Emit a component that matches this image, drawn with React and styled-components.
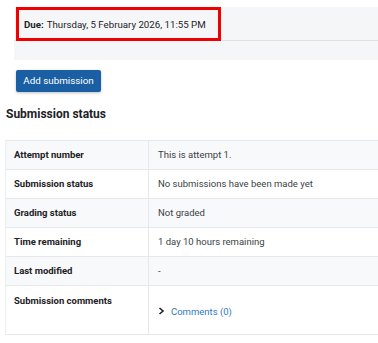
import React from 'react';
import styled, { createGlobalStyle } from 'styled-components';

const GlobalStyle = createGlobalStyle`
  body {
    margin: 0;
    background: #fff;
    font-family: Roboto, 'Liberation Sans', sans-serif;
    color: #1d2125;
    overflow: hidden;
  }
`;

const Page = styled.div`
  width: 378px;
  height: 343px;
  overflow: hidden;
  padding-top: 7px;
  box-sizing: border-box;
`;

const DatesPanel = styled.div`
  margin-left: 14px;
  width: 420px;
  height: 53px;
  background: #f5f6f8;
`;

const DatesRow = styled.div`
  height: 33px;
  border-bottom: 1px solid #dee2e6;
`;

const Highlight = styled.div`
  display: inline-flex;
  align-items: center;
  box-sizing: border-box;
  margin-left: 2px;
  width: 205px;
  height: 34px;
  padding-left: 5px;
  border: 3px solid #f00000;
  font-size: 9.7px;
  color: #1d2125;
  white-space: nowrap;
`;

const Label = styled.strong`
  font-weight: 700;
  margin-right: 3px;
`;

const Actions = styled.div`
  padding: 9px 0 0 16px;
`;

const PrimaryButton = styled.button`
  height: 22px;
  width: 85px;
  padding: 0;
  border: none;
  border-radius: 2px;
  background: #1a5fa3;
  color: #fff;
  font-family: Roboto, 'Liberation Sans', sans-serif;
  font-size: 9.8px;
  box-shadow: 0 1px 3px rgba(0, 0, 0, 0.25);
`;

const Heading = styled.h3`
  margin: 14px 0 0 6px;
  font-size: 12px;
  font-weight: 700;
  color: #1d2125;
  line-height: 16px;
`;

const Table = styled.table`
  margin: 18px 0 0 5px;
  width: 440px;
  border-collapse: collapse;
  font-size: 9.5px;
`;

const Row = styled.tr`
  background: ${p => (p.$striped ? '#f8f9fa' : '#fff')};
  border-top: 1px solid #e6e8ea;
`;

const HeadCell = styled.th`
  width: 134px;
  height: 28px;
  padding: 0 0 0 8px;
  text-align: left;
  vertical-align: ${p => (p.$top ? 'top' : 'middle')};
  padding-top: ${p => (p.$top ? '9px' : '0')};
  font-weight: 700;
  color: #1d2125;
  border-right: 1px solid #e6e8ea;
  border-left: 1px solid #eceef0;
`;

const ValueCell = styled.td`
  height: 28px;
  padding: 0 0 0 9px;
  color: #3a3f44;
  vertical-align: middle;
`;

const CommentsCell = styled(ValueCell)`
  height: 44px;
  padding-top: 4px;
`;

const CommentsToggle = styled.span`
  display: inline-flex;
  align-items: center;
  gap: 6px;
  color: #2f79c0;
`;

const Bottom = styled.tr`
  border-bottom: 1px solid #e6e8ea;
`;

const rows = [
  ['Attempt number', 'This is attempt 1.'],
  ['Submission status', 'No submissions have been made yet'],
  ['Grading status', 'Not graded'],
  ['Time remaining', '1 day 10 hours remaining'],
  ['Last modified', '-'],
];

const App = () => {
  return (
    <Page>
      <GlobalStyle />
      <DatesPanel>
        <DatesRow>
          <Highlight>
            <Label>Due:</Label> Thursday, 5 February 2026, 11:55 PM
          </Highlight>
        </DatesRow>
      </DatesPanel>
      <Actions>
        <PrimaryButton>Add submission</PrimaryButton>
      </Actions>
      <Heading>Submission status</Heading>
      <Table>
        <tbody>
          {rows.map(([label, value], i) => (
            <Row key={label} $striped={i % 2 === 0}>
              <HeadCell>{label}</HeadCell>
              <ValueCell>{value}</ValueCell>
            </Row>
          ))}
          <Row as={Bottom}>
            <HeadCell $top>Submission comments</HeadCell>
            <CommentsCell>
              <CommentsToggle>
                <svg width="7" height="8" viewBox="0 0 7 8">
                  <path d="M1.5 1 L5 4 L1.5 7" fill="none" stroke="#1d2125" strokeWidth="1.6" />
                </svg>
                Comments (0)
              </CommentsToggle>
            </CommentsCell>
          </Row>
        </tbody>
      </Table>
    </Page>
  );
};

export default App;
